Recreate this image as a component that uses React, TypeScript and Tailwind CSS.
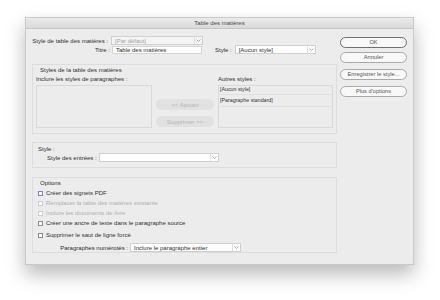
function Chevron() {
  return (
    <svg width="5" height="3" viewBox="0 0 5 3" className="shrink-0">
      <path d="M0.5 0.5 L2.5 2.5 L4.5 0.5" fill="none" stroke="#8a8a8a" strokeWidth="0.7" />
    </svg>
  );
}

function Select({ value, width, disabled }: { value: string; width: string; disabled?: boolean }) {
  return (
    <div
      className={`${width} h-[9px] flex items-center border border-[#d0d0d0] ${
        disabled ? "bg-[#f4f4f4] text-[#a3a3a3]" : "bg-white text-[#2f2f2f]"
      }`}
    >
      <span className="flex-1 pl-[3px] leading-none truncate whitespace-nowrap">{value}</span>
      <span className="w-[8px] h-full flex items-center justify-center border-l border-[#e2e2e2]">
        <Chevron />
      </span>
    </div>
  );
}

function PillButton({ label, strong }: { label: string; strong?: boolean }) {
  return (
    <div
      className={`h-[11px] w-[67px] rounded-full flex items-center justify-center bg-[#f8f8f8] text-[#555] text-[5.7px] leading-none whitespace-nowrap border ${
        strong ? "border-[#6f6f6f]" : "border-[#a9a9a9]"
      }`}
    >
      {label}
    </div>
  );
}

function GreyButton({ label }: { label: string }) {
  return (
    <div className="h-[11px] w-[58px] rounded-full flex items-center justify-center bg-[#e1e1e1] text-[#b4b4b4] leading-none whitespace-nowrap">
      {label}
    </div>
  );
}

function Check({ label, disabled, focus }: { label: string; disabled?: boolean; focus?: boolean }) {
  return (
    <div className={`flex items-center gap-[3px] h-[6px] ${disabled ? "text-[#b0b0b0]" : "text-[#2f2f2f]"}`}>
      <span
        className={`w-[5px] h-[5px] shrink-0 bg-white border ${
          focus ? "border-[#7b7fd0]" : disabled ? "border-[#cfcfcf]" : "border-[#8c8c8c]"
        }`}
      />
      <span className="leading-none whitespace-nowrap">{label}</span>
    </div>
  );
}

export default function App() {
  return (
    <div
      className="w-[440px] h-[300px] bg-white overflow-hidden pt-[17px] pl-[25px] text-[6px]"
      style={{ fontFamily: '"Liberation Sans", Arial, sans-serif' }}
    >
      <div className="w-[389px] h-[248px] bg-[#ececec] border border-[#c9c9c9] shadow-[0_9px_18px_rgba(0,0,0,0.28)] flex flex-col">
        {/* Title bar */}
        <div className="h-[11px] shrink-0 bg-gradient-to-b from-[#ebebeb] to-[#d9d9d9] border-b border-[#c6c6c6] flex items-center justify-center text-[#4a4a4a] leading-none">
          Table des matières
        </div>

        <div className="flex pl-[6px] text-[#2f2f2f]">
          {/* Left column */}
          <div className="w-[305px] flex flex-col pt-[7px]">
            <div className="flex items-center h-[9px] whitespace-nowrap">
              <span className="w-[79px] text-right pr-[3px] leading-none">Style de table des matières :</span>
              <Select value="[Par défaut]" width="w-[92px]" disabled />
            </div>
            <div className="flex items-center h-[9px] whitespace-nowrap">
              <span className="w-[80px] text-right pr-[2px] leading-none">Titre :</span>
              <div className="w-[90px] h-[8px] bg-white border border-[#d6d6d6] flex items-center pl-[3px] leading-none">
                Table des matières
              </div>
              <span className="ml-[13px] mr-[3px] leading-none">Style :</span>
              <Select value="[Aucun style]" width="w-[81px]" />
            </div>

            {/* Styles group */}
            <div className="mt-[10px] h-[70px] border border-[#dddddd] pl-[3px] pt-[2px] whitespace-nowrap">
              <div className="ml-[4px] leading-[6px]">Styles de la table des matières</div>
              <div className="flex mt-[3px]">
                <div className="w-[116px] flex flex-col">
                  <div className="leading-[6px]">Inclure les styles de paragraphes :</div>
                  <div className="mt-[3px] h-[43px] border border-[#d9d9d9]" />
                </div>
                <div className="w-[66px] flex flex-col items-center pt-[23px] gap-[6px]">
                  <GreyButton label="<< Ajouter" />
                  <GreyButton label="Supprimer >>" />
                </div>
                <div className="w-[115px] flex flex-col">
                  <div className="leading-[6px]">Autres styles :</div>
                  <div className="mt-[3px] h-[43px] border border-[#d9d9d9] flex flex-col text-[5.3px]">
                    <div className="h-[9px] flex items-center pl-[1px] border-b border-[#e0e0e0] leading-none">[Aucun style]</div>
                    <div className="h-[12px] flex items-center pl-[1px] border-b border-[#e0e0e0] leading-none">
                      [Paragraphe standard]
                    </div>
                  </div>
                </div>
              </div>
            </div>

            {/* Style group */}
            <div className="mt-[8px] h-[26px] border border-[#dddddd] pl-[5px] pt-[3px] whitespace-nowrap">
              <div className="leading-[6px]">Style :</div>
              <div className="flex items-center ml-[9px] mt-[1px]">
                <span className="mr-[2px] leading-none">Style des entrées :</span>
                <Select value="" width="w-[120px]" />
              </div>
            </div>

            {/* Options group */}
            <div className="mt-[9px] h-[76px] border border-[#dddddd] pl-[5px] pt-[2px] flex flex-col whitespace-nowrap">
              <div className="ml-[2px] leading-[6px] text-[#2a2a2a]">Options</div>
              <div className="mt-[4px] flex flex-col gap-[4px]">
                <Check label="Créer des signets PDF" focus />
                <Check label="Remplacer la table des matières existante" disabled />
                <Check label="Inclure les documents de livre" disabled />
                <Check label="Créer une ancre de texte dans le paragraphe source" />
              </div>
              <div className="mt-[6px]">
                <Check label="Supprimer le saut de ligne forcé" />
              </div>
              <div className="flex items-center mt-[5px]">
                <span className="w-[92px] text-right pr-[2px] leading-none text-[#2a2a2a]">Paragraphes numérotés :</span>
                <Select value="Inclure le paragraphe entier" width="w-[111px]" />
              </div>
            </div>
          </div>

          {/* Right buttons */}
          <div className="ml-[3px] flex flex-col pt-[8px]">
            <PillButton label="OK" strong />
            <div className="mt-[4px]">
              <PillButton label="Annuler" />
            </div>
            <div className="mt-[6px]">
              <PillButton label="Enregistrer le style..." />
            </div>
            <div className="mt-[6px]">
              <PillButton label="Plus d'options" />
            </div>
          </div>
        </div>
      </div>
    </div>
  );
}
